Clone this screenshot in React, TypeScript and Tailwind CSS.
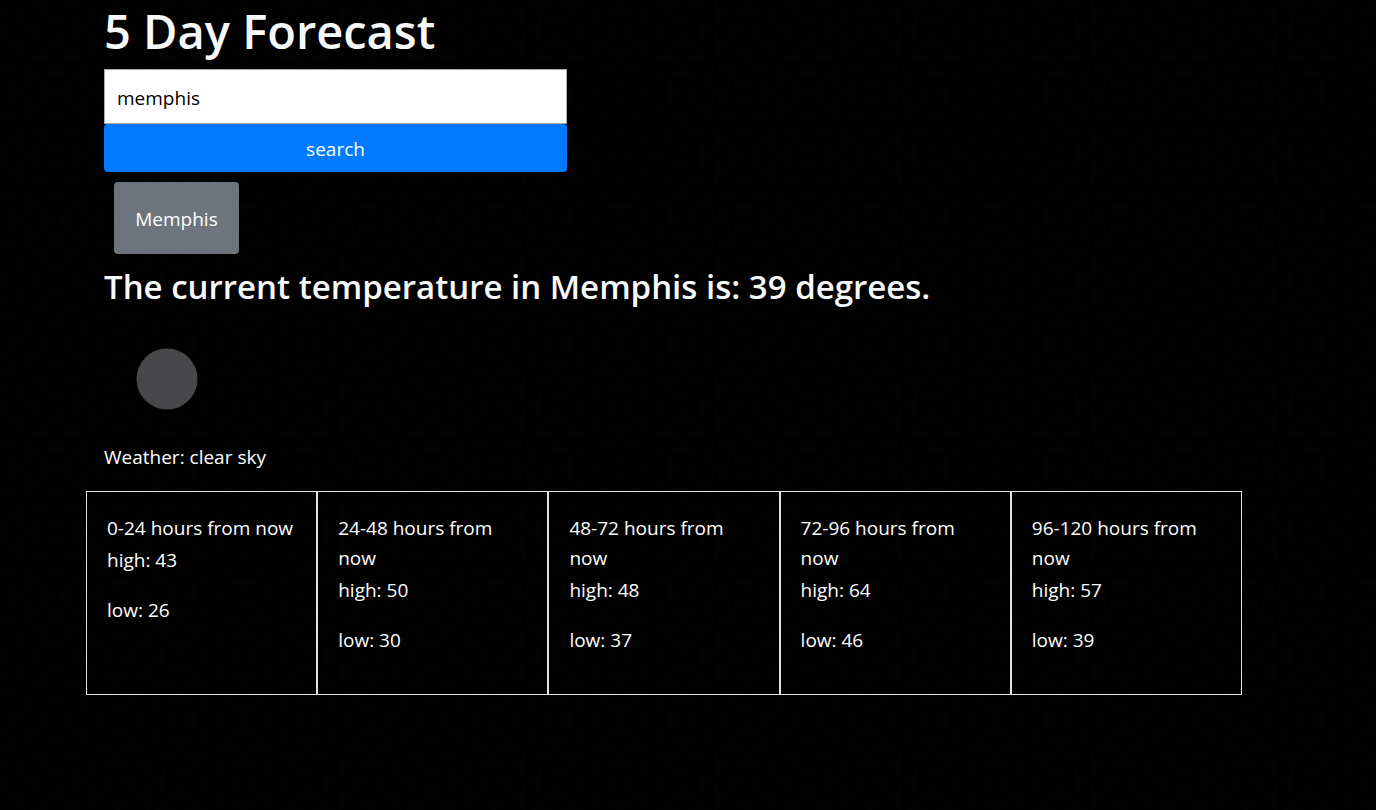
const days = [
  { label: "0-24 hours from now", high: 43, low: 26 },
  { label: "24-48 hours from now", high: 50, low: 30 },
  { label: "48-72 hours from now", high: 48, low: 37 },
  { label: "72-96 hours from now", high: 64, low: 46 },
  { label: "96-120 hours from now", high: 57, low: 39 },
];

// Facets lit from above and below; the neighbouring cell is the same shape turned by 90 degrees.
const facets =
  "M16 16H48L32 32Z M16 48H48L32 32Z M16 16V48L0 32Z M48 16V48L64 32Z M0 0H32L16 16Z M32 0H64L48 16Z M0 64H32L16 48Z M32 64H64L48 48Z";

function Backdrop() {
  return (
    <svg className="absolute inset-0 -z-10 size-full" aria-hidden="true">
      <defs>
        <pattern id="facets" width="128" height="128" patternUnits="userSpaceOnUse" patternTransform="translate(25 -1) scale(0.979)">
          <g fill="#020202">
            <path d={facets} />
            <path d={facets} transform="translate(64 64)" />
            <path d={facets} transform="translate(128 0) rotate(90)" />
            <path d={facets} transform="translate(64 64) rotate(90)" />
          </g>
        </pattern>
      </defs>
      <rect width="100%" height="100%" fill="url(#facets)" />
    </svg>
  );
}

export default function App() {
  return (
    <div className="relative isolate min-h-screen bg-black px-4 font-['Open_Sans','Noto_Sans',sans-serif] text-[19px] leading-[30px] text-white">
      <Backdrop />
      <main className="mx-auto w-full max-w-[1168px]">
        <h1 className="pt-0.5 text-[47px] leading-[58px] font-semibold text-[#f8f9fa]">5 Day Forecast</h1>
        <form className="mt-[9px] flex w-[463px] max-w-full flex-col" onSubmit={(e) => e.preventDefault()}>
          <input
            type="text"
            aria-label="City"
            defaultValue="memphis"
            className="h-[55px] border border-[#a9a9a9] bg-white px-3 pt-0.5 text-black outline-none"
          />
          <button type="submit" className="h-12 rounded bg-[#007bff] pt-0.5">search</button>
        </form>
        <button type="button" className="mt-2.5 ml-2.5 h-[72px] min-w-[125px] rounded bg-[#6c757d] px-5 pt-0.5">Memphis</button>
        <h2 className="mt-3 text-[33px] leading-[42px] font-semibold text-[#f8f9fa]">
          The current temperature in Memphis is: 39 degrees.
        </h2>
        <svg className="mt-2 size-[126px]" viewBox="0 0 126 126" role="img" aria-label="clear sky">
          <circle cx="63" cy="63" r="30.5" fill="#48484a" />
        </svg>
        <p>Weather: clear sky</p>
        <div className="mt-[19px] grid grid-cols-2 md:grid-cols-5 lg:mr-[30px] lg:-ml-[18px]">
          {days.map((d) => (
            <section key={d.label} className="min-h-[204px] border border-[#dee2e6] px-5 pt-[21px]">
              <h3>{d.label}</h3>
              <p className="mt-0.5">high: {d.high}</p>
              <p className="mt-5">low: {d.low}</p>
            </section>
          ))}
        </div>
      </main>
    </div>
  );
}
